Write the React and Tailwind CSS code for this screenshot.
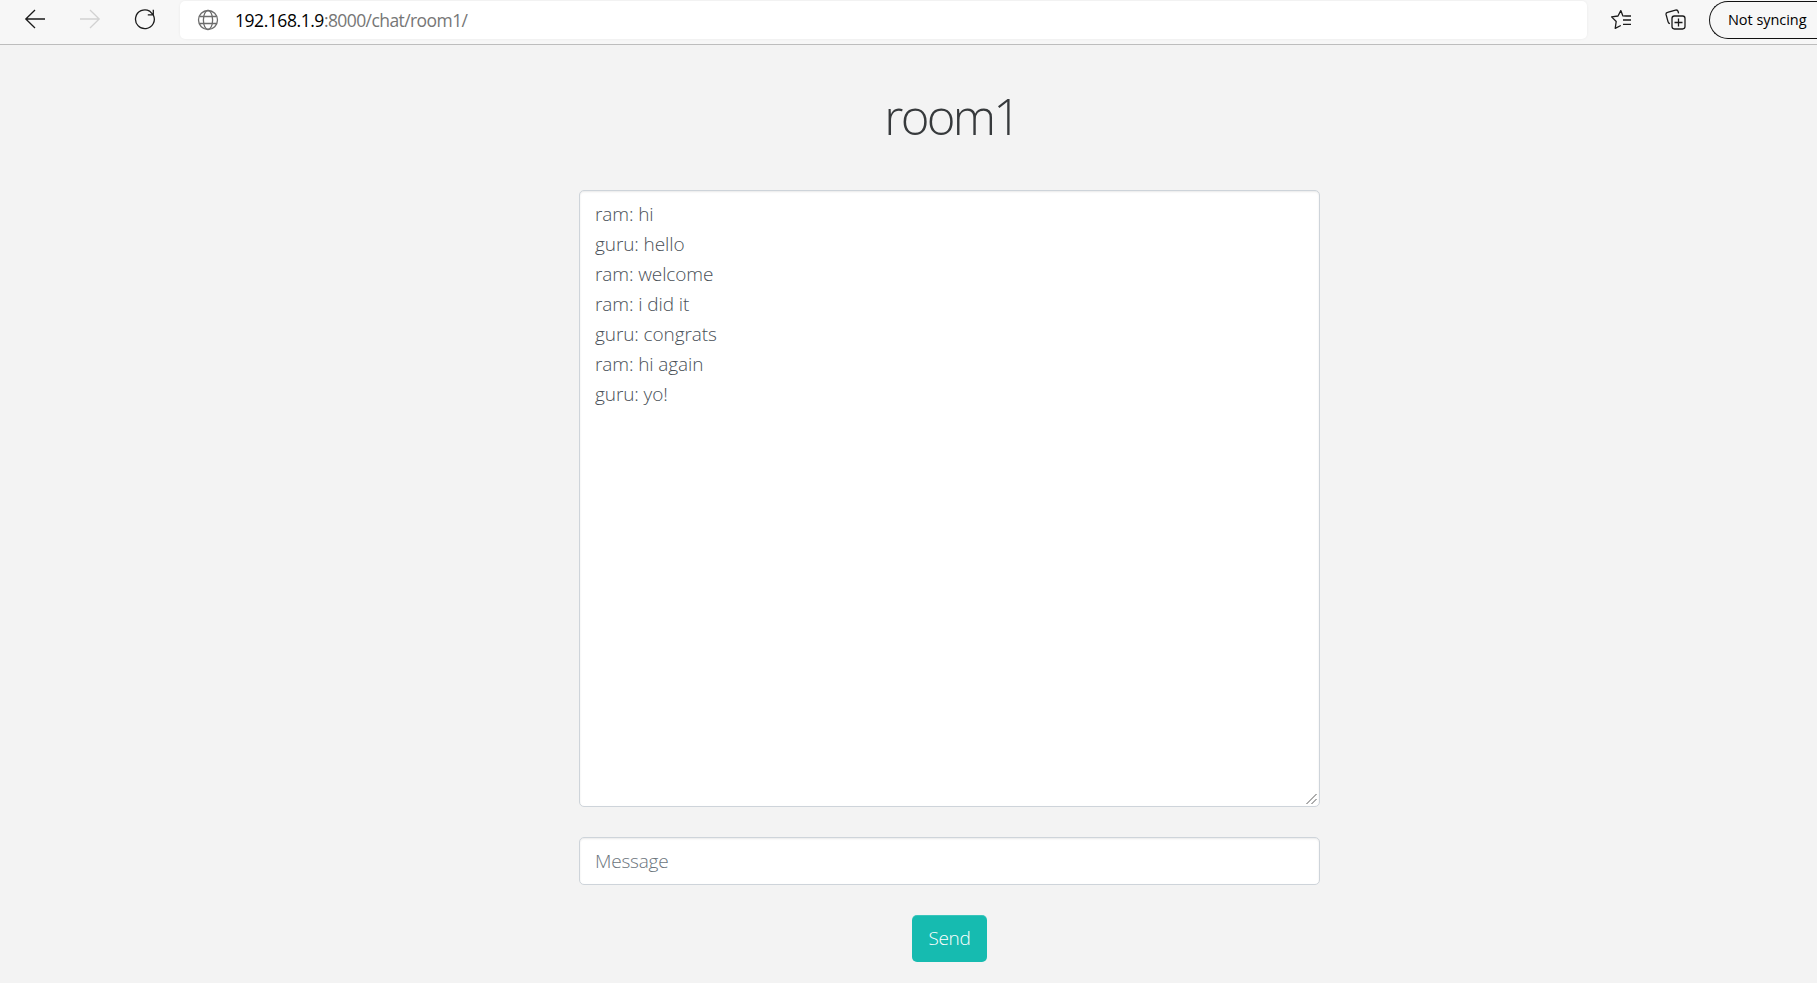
import React from 'react';

const messages = [
  'ram: hi',
  'guru: hello',
  'ram: welcome',
  'ram: i did it',
  'guru: congrats',
  'ram: hi again',
  'guru: yo!',
];

function Icon({ children, className }) {
  return (
    <svg viewBox="0 0 22 22" className={`h-[22px] w-[22px] shrink-0 ${className}`} fill="none" stroke="currentColor" strokeWidth="1.3">
      {children}
    </svg>
  );
}

function Toolbar() {
  return (
    <header className="flex h-[45px] items-start border-b border-[#bdbdbd] bg-[#f7f7f7]">
      <div className="flex items-center gap-[33px] pt-[8px] pl-[24px]">
        <Icon className="text-[#1b1b1b]">
          <path d="M21 11H1.8M11 2L1.8 11L11 20" />
        </Icon>
        <Icon className="text-[#d2d2d2]">
          <path d="M1 11H20.2M11 2L20.2 11L11 20" />
        </Icon>
        <Icon className="text-[#1b1b1b]">
          <path d="M19.4 7.2A9.4 9.4 0 1 1 15.6 3.1L19 6.6M19.3 1.8V6.8H13.8" />
        </Icon>
      </div>
      <div className="mt-px ml-[24px] flex h-[38px] w-[1407px] shrink-0 items-center rounded-[5px] bg-white pl-[17px] shadow-[0_0_3px_rgba(0,0,0,0.06)]">
        <Icon className="text-[#6d6d6d]">
          <circle cx="11" cy="11" r="9.5" />
          <ellipse cx="11" cy="11" rx="4.6" ry="9.5" />
          <path d="M2.3 7.5H19.7M2.3 14.5H19.7" />
        </Icon>
        <span className="ml-[16px] text-[17.5px] tracking-[-0.58px] whitespace-nowrap text-[#767676]">
          <span className="tracking-[-0.45px] text-black">192.168.1.9</span>:8000/chat/room1/
        </span>
      </div>
      <Icon className="mt-[8px] ml-[23px] text-[#1b1b1b]">
        <path d="M16.3 8.2L12.9 7.9L10.8 2.6L8 8L1.6 8.9L6.2 13.5L5.2 20.3L10.8 17.5M13 12H21M13 16.4H21M14.2 8H21" strokeLinejoin="round" />
      </Icon>
      <Icon className="mt-[8px] ml-[33px] text-[#1b1b1b]">
        <path d="M4.9 15.7C3.7 15.4 3.2 14.7 3 13.7L1.1 6.7C.8 5.4 1.3 4.6 2.5 4.3L10.5 2.1C11.9 1.8 12.8 2.3 13.1 3.5L13.6 5.4" />
        <rect x="7" y="8" width="13" height="13" rx="2.4" />
        <path d="M9.5 14.5H17.5M13.5 10.5V18.5" />
      </Icon>
      <div className="mt-px ml-[22px] flex h-[38px] flex-1 items-center rounded-l-full border-[1.5px] border-r-0 border-[#111] pl-[18px] text-[14.5px] tracking-[-0.05px] whitespace-nowrap text-black">
        Not syncing
      </div>
    </header>
  );
}

export default function App() {
  return (
    <div className="flex h-[983px] w-[1817px] flex-col overflow-hidden bg-[#f3f3f3] font-['Open_Sans','Noto_Sans',sans-serif]">
      <Toolbar />
      <main className="flex flex-col items-center pr-[2px] pl-[84px]">
        <h1 className="mt-[41px] h-[61px] pl-[4px] text-[49px] leading-[60px] font-light tracking-[-2.7px] text-[#373a3c]">room1</h1>
        <section className="mt-[43px] flex h-[617px] w-[741px] justify-between rounded-[5px] border border-[#ced4da] bg-white pt-[8px] pl-[15px] shadow-[inset_0_1px_2px_rgba(0,0,0,0.09)]">
          <div className="flex flex-col text-[19px] leading-[30px] font-light tracking-[-0.1px] text-[#495057]">
            {messages.map((text) => (
              <p key={text} className="whitespace-pre">{text}</p>
            ))}
          </div>
          <svg viewBox="0 0 12 12" className="mr-[1px] mb-[1px] h-3 w-3 self-end" stroke="#5c5c5c" strokeWidth="1">
            <path d="M0.5 11L10.5 1M5.5 11L10.5 6" />
          </svg>
        </section>
        <div className="mt-[30px] flex h-[48px] w-[741px] items-center rounded-[5px] border border-[#ced4da] bg-white pl-[15px] text-[19px] font-light tracking-[-0.2px] text-[#6c757d] shadow-[inset_0_1px_2px_rgba(0,0,0,0.09)]">
          Message
        </div>
        <button className="mt-[30px] flex h-[47px] w-[75px] items-center justify-center rounded-[5px] bg-[#16bbb0] text-[19px] font-light tracking-[-0.3px] text-white shadow-[inset_0_1px_0_rgba(255,255,255,0.15)]">
          Send
        </button>
      </main>
    </div>
  );
}
